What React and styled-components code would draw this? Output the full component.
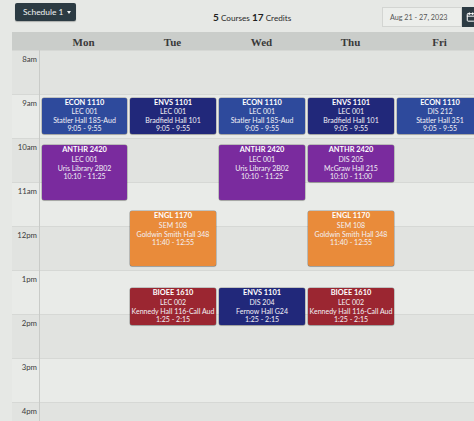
import React from "react";
import styled, { createGlobalStyle } from "styled-components";
import { Calendar } from "lucide-react";

const Global = createGlobalStyle`
  html, body { margin: 0; padding: 0; overflow: hidden; }
  body { background: #d9dbd8; font-family: "Lato", "Open Sans", sans-serif; }
`;

const HOUR = 44;
const START = 8;
const HOURS = [8, 9, 10, 11, 12, 13, 14, 15, 16];
const DAYS = ["Mon", "Tue", "Wed", "Thu", "Fri"];

const COLORS = {
  blue: "#2e4a9c",
  navy: "#21287a",
  purple: "#7a2b9e",
  orange: "#e98b3a",
  red: "#9b2631",
};

const EVENTS = {
  Mon: [
    { t: "ECON 1110", s: "LEC 001", r: "Statler Hall 185-Aud", a: [9, 5], b: [9, 55], c: "blue" },
    { t: "ANTHR 2420", s: "LEC 001", r: "Uris Library 2B02", a: [10, 10], b: [11, 25], c: "purple" },
  ],
  Tue: [
    { t: "ENVS 1101", s: "LEC 001", r: "Bradfield Hall 101", a: [9, 5], b: [9, 55], c: "navy" },
    { t: "ENGL 1170", s: "SEM 108", r: "Goldwin Smith Hall 348", a: [11, 40], b: [12, 55], c: "orange" },
    { t: "BIOEE 1610", s: "LEC 002", r: "Kennedy Hall 116-Call Aud", a: [13, 25], b: [14, 15], c: "red" },
  ],
  Wed: [
    { t: "ECON 1110", s: "LEC 001", r: "Statler Hall 185-Aud", a: [9, 5], b: [9, 55], c: "blue" },
    { t: "ANTHR 2420", s: "LEC 001", r: "Uris Library 2B02", a: [10, 10], b: [11, 25], c: "purple" },
    { t: "ENVS 1101", s: "DIS 204", r: "Fernow Hall G24", a: [13, 25], b: [14, 15], c: "navy" },
  ],
  Thu: [
    { t: "ENVS 1101", s: "LEC 001", r: "Bradfield Hall 101", a: [9, 5], b: [9, 55], c: "navy" },
    { t: "ANTHR 2420", s: "DIS 205", r: "McGraw Hall 215", a: [10, 10], b: [11, 0], c: "purple" },
    { t: "ENGL 1170", s: "SEM 108", r: "Goldwin Smith Hall 348", a: [11, 40], b: [12, 55], c: "orange" },
    { t: "BIOEE 1610", s: "LEC 002", r: "Kennedy Hall 116-Call Aud", a: [13, 25], b: [14, 15], c: "red" },
  ],
  Fri: [
    { t: "ECON 1110", s: "DIS 212", r: "Statler Hall 351", a: [9, 5], b: [9, 55], c: "blue" },
  ],
};

const fmt = ([h, m]) => `${h > 12 ? h - 12 : h}:${String(m).padStart(2, "0")}`;
const toY = ([h, m]) => (h - START) * HOUR + (m * HOUR) / 60;
const hourLabel = (h) => (h < 12 ? `${h}am` : h === 12 ? "12pm" : `${h - 12}pm`);

const Page = styled.div`
  width: 484px;
  height: 421px;
  overflow: hidden;
  background: #e6e8e5;
  padding-left: 12px;
  box-sizing: border-box;
`;

const TopBar = styled.div`
  height: 32px;
  display: flex;
  align-items: flex-start;
  padding: 3px 0 0 3px;
  box-sizing: border-box;
`;

const ScheduleButton = styled.button`
  width: 61px;
  height: 18px;
  border: none;
  border-radius: 2px;
  background: #2c3b43;
  color: #f2f4f4;
  font-family: "Lato", sans-serif;
  font-size: 8.4px;
  padding: 0 0 0 8px;
  display: flex;
  align-items: center;
  gap: 2px;
  box-shadow: 0 1px 1px rgba(0, 0, 0, 0.25);
`;

const Caret = styled.span`
  display: inline-block;
  width: 0;
  height: 0;
  border-left: 2.5px solid transparent;
  border-right: 2.5px solid transparent;
  border-top: 3px solid #f2f4f4;
  margin-left: 2px;
  margin-top: 1px;
`;

const Summary = styled.div`
  margin-left: 137px;
  margin-top: 8px;
  color: #2a2a2a;
  font-size: 8.2px;
  white-space: nowrap;
`;

const Big = styled.b`
  font-size: 10px;
  font-weight: 700;
  color: #1f1f1f;
`;

const DateGroup = styled.div`
  margin-left: auto;
  margin-top: 4px;
  display: flex;
`;

const DateBox = styled.div`
  width: 80px;
  height: 20px;
  box-sizing: border-box;
  border: 1px solid #d3d5d2;
  background: #eceeeb;
  color: #555;
  font-size: 7.2px;
  display: flex;
  align-items: center;
  padding-left: 7px;
`;

const CalButton = styled.div`
  width: 22px;
  height: 20px;
  background: #2c3b43;
  display: flex;
  align-items: center;
  padding-left: 4px;
  box-sizing: border-box;
`;

const Grid = styled.div`
  display: grid;
  grid-template-columns: 27px repeat(5, 89px);
`;

const HeadCell = styled.div`
  height: 18px;
  background: #cacdca;
  display: flex;
  align-items: center;
  justify-content: center;
  font-family: "Liberation Serif", "Times New Roman", serif;
  font-weight: 700;
  font-size: 11px;
  color: #3a3a3a;
  padding-top: 1px;
  box-sizing: border-box;
`;

const Column = styled.div`
  position: relative;
  border-left: ${(p) => (p.$first ? "1px solid #c9cbc8" : "none")};
`;

const HourRow = styled.div`
  height: ${HOUR}px;
  box-sizing: border-box;
  border-top: 1px solid #d6d8d5;
  background: ${(p) => (p.$odd ? "#e9ebe8" : "#e1e3e0")};
`;

const TimeCell = styled(HourRow)`
  font-size: 7.8px;
  color: #3d3d3d;
  text-align: right;
  padding: 3px 2px 0 0;
`;

const Event = styled.div`
  position: absolute;
  left: 2px;
  right: 1px;
  box-sizing: border-box;
  border-radius: 2px;
  background: ${(p) => COLORS[p.$c]};
  box-shadow: 0 0 0 0.5px rgba(0, 0, 0, 0.35), 0 1px 1px rgba(0, 0, 0, 0.15);
  color: #f3f1f6;
  text-align: center;
  font-size: 7px;
  line-height: 8.6px;
  padding-top: 1px;
  white-space: nowrap;
  overflow: hidden;
`;

const Title = styled.div`
  font-weight: 700;
  font-size: 7.4px;
  color: #ffffff;
`;

export default function App() {
  return (
    <>
      <Global />
      <Page>
        <TopBar>
          <ScheduleButton>
            Schedule 1<Caret />
          </ScheduleButton>
          <Summary>
            <Big>5</Big> Courses <Big>17</Big> Credits
          </Summary>
          <DateGroup>
            <DateBox>Aug 21 - 27, 2023</DateBox>
            <CalButton>
              <Calendar size={10} color="#ffffff" strokeWidth={2.4} />
            </CalButton>
          </DateGroup>
        </TopBar>
        <Grid>
          <HeadCell />
          {DAYS.map((d) => (
            <HeadCell key={d}>{d}</HeadCell>
          ))}
          <Column>
            {HOURS.map((h, i) => (
              <TimeCell key={h} $odd={i % 2 === 1}>
                {hourLabel(h)}
              </TimeCell>
            ))}
          </Column>
          {DAYS.map((d, di) => (
            <Column key={d} $first={di === 0}>
              {HOURS.map((h, i) => (
                <HourRow key={h} $odd={i % 2 === 1} />
              ))}
              {EVENTS[d].map((e, k) => (
                <Event
                  key={k}
                  $c={e.c}
                  style={{ top: toY(e.a), height: toY(e.b) - toY(e.a) }}
                >
                  <Title>{e.t}</Title>
                  <div>{e.s}</div>
                  <div>{e.r}</div>
                  <div>
                    {fmt(e.a)} - {fmt(e.b)}
                  </div>
                </Event>
              ))}
            </Column>
          ))}
        </Grid>
      </Page>
    </>
  );
}
